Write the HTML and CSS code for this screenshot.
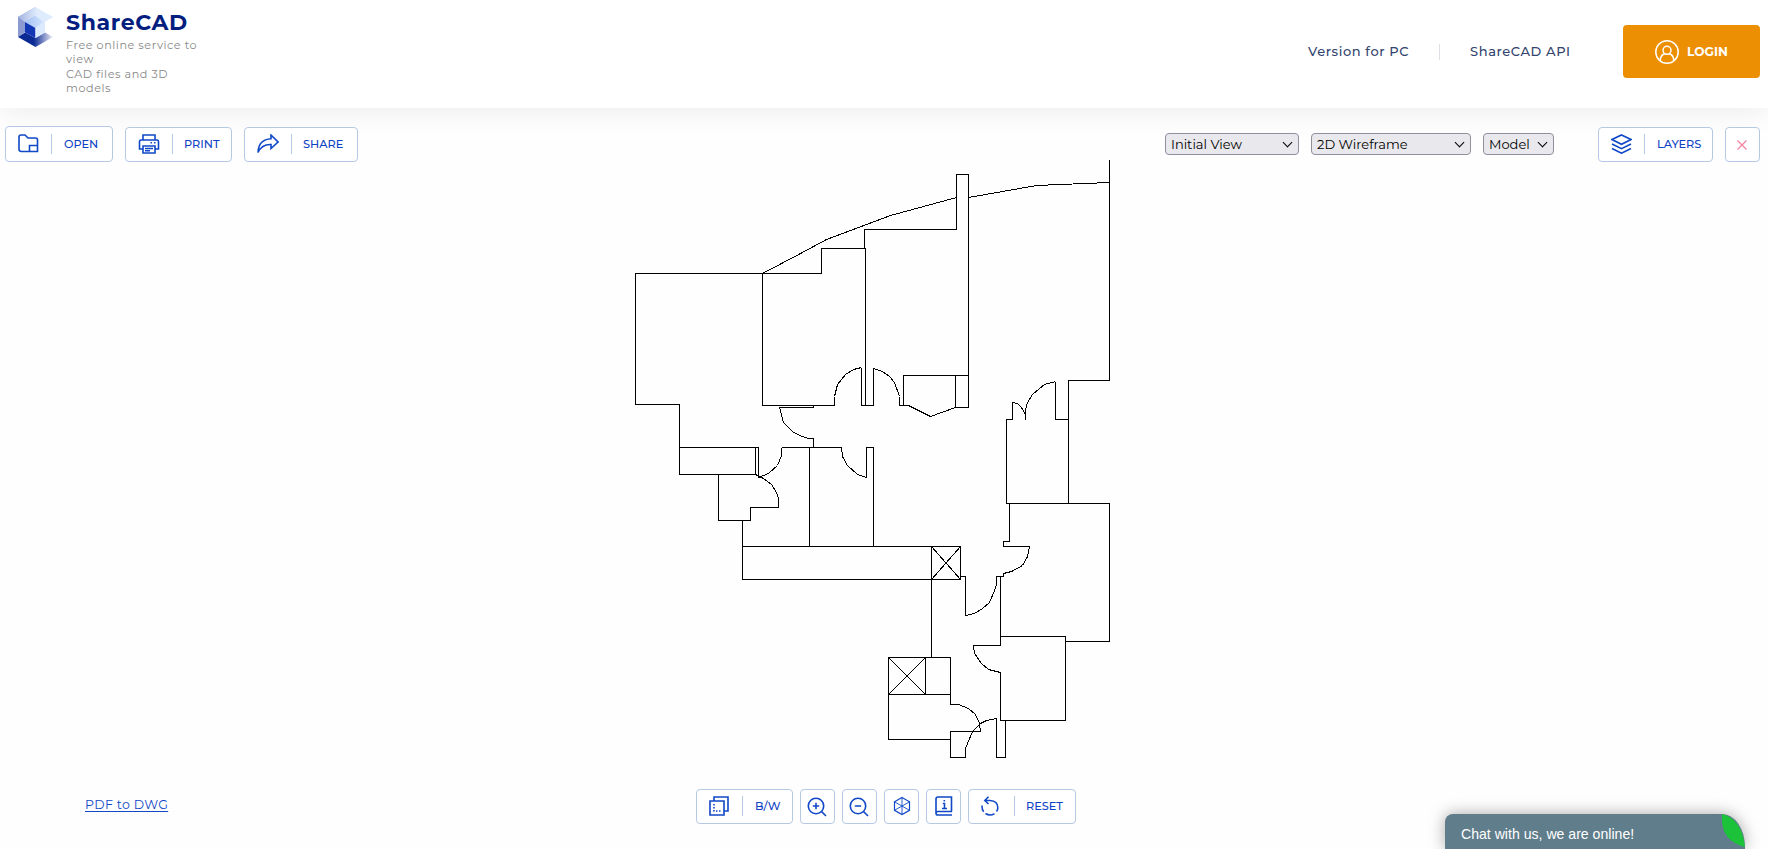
FILE: index.html
```html
<!DOCTYPE html>
<html lang="en">
<head>
<meta charset="utf-8">
<title>ShareCAD</title>
<link rel="stylesheet" href="styles.css">
</head>
<body>
<header class="header">
  <a class="brand">
    <svg class="brand-logo" width="35" height="40" viewBox="0 0 35 40">
      <defs>
        <linearGradient id="g1" x1="0" x2="1"><stop offset="0" stop-color="#a3b3df"/><stop offset="1" stop-color="#dbe8fb"/></linearGradient>
        <linearGradient id="g2" x1="0" x2="1"><stop offset="0.45" stop-color="#0b2a94"/><stop offset="1" stop-color="#f0f0f6"/></linearGradient>
        <linearGradient id="g3" x1="0" x2="1"><stop offset="0" stop-color="#a5c3f6"/><stop offset="1" stop-color="#d5e5fd"/></linearGradient>
      </defs>
      <path d="M0 10 17.500 0V10L7 15V25L0 30Z" fill="#8b9bd2"/>
      <path d="M0 10 17.500 0V9L7 15Z" fill="url(#g1)"/>
      <path d="M17.500 0 35 10 27 15 17.500 9Z" fill="#dfecfe"/>
      <path d="M0 30 7 25.500 17.500 31 27 25.500 35 30 17.500 40Z" fill="url(#g2)"/>
      <path d="M7 15 17.500 9 27 15 17.500 21Z" fill="url(#g3)"/>
      <path d="M7 15 17.500 21V31L7 25.500Z" fill="#1236b4"/>
      <path d="M27 15 17.500 21V31L27 25.500Z" fill="#dceafe"/>
    </svg>
    <span class="brand-text">
      <span class="brand-name">ShareCAD</span>
      <span class="brand-tag">Free online service to<br>view<br>CAD files and 3D<br>models</span>
    </span>
  </a>
  <nav class="nav">
    <a class="nav-link nav-pc">Version for PC</a>
    <a class="nav-link nav-api">ShareCAD API</a>
    <a class="login">
      <svg width="24" height="24" viewBox="0 0 24 24" fill="none" stroke="#fff" stroke-width="1.500"><circle cx="12" cy="12" r="11.200"/><circle cx="12" cy="10.300" r="4"/><path d="M5.200 20.500C5.400 16.500 7.500 14.300 10 13.800M18.800 20.500C18.600 16.500 16.500 14.300 14 13.800"/></svg>
      <span class="login-label">LOGIN</span>
    </a>
  </nav>
</header>
<main class="viewer">
  <div class="toolbar">
    <button class="btn btn-open"><svg width="21" height="19" viewBox="0 0 21 19" class="ico"><path d="M11.500 17.500H3.500Q1 17.500 1 15V3Q1 1 3 1H7L10 4H17.500Q19.500 4 19.500 6V17.500H11.500V11.500H19.500"/></svg><i class="sep"></i><span class="label">OPEN</span></button>
    <button class="btn btn-print"><svg width="22" height="20" viewBox="0 0 22 20" class="ico"><path d="M5 6V1H17V6M5 15H1.500V7.500Q1.500 6 3 6H19Q20.500 6 20.500 7.500V15H17M5 12H17V19H5ZM7 14.500H15M7 16.700H12M12.500 8.800H14M16 8.800H17.500"/></svg><i class="sep"></i><span class="label">PRINT</span></button>
    <button class="btn btn-share"><svg width="22" height="20" viewBox="0 0 22 20" class="ico"><path d="M14 1 21 8 14 14.500V10.500Q5 10 1 18.500Q1.500 5.500 14 4.800Z"/></svg><i class="sep"></i><span class="label">SHARE</span></button>
    <div class="view-options">
      <span class="pick pick-view"><select><option>Initial View</option></select></span>
      <span class="pick pick-style"><select><option>2D Wireframe</option></select></span>
      <span class="pick pick-space"><select><option>Model</option></select></span>
    </div>
    <button class="btn btn-layers"><svg width="21" height="20" viewBox="0 0 21 20" class="ico"><path d="M10.500 1 20 5.500 10.500 10.300 1 5.500ZM1 10 10.500 14.700 20 10M1 14.500 10.500 19.200 20 14.500"/></svg><i class="sep"></i><span class="label">LAYERS</span></button>
    <button class="btn btn-close"><svg width="10" height="10" viewBox="0 0 10 10" fill="none" stroke="#f77f9e" stroke-width="1.200"><path d="M.5.5 9.500 9.500M9.500.5.5 9.500"/></svg></button>
  </div>
  <svg class="drawing" width="500" height="620" viewBox="620 160 500 620">
    <g transform="translate(.5 .5)">
      <path d="M762 273H635V404H679V474H755V447M679 447H758V477M762 273H821V248H865V405M864 248V229H956V174H968V407H955V375M762 273V405H834V396M861 367V405H873V368M899 396V405H908M903 405V375H968M779 407H813V405"/>
      <path d="M762 273 800 253 826 239 890 215 956 197M968 197 1036 185 1060 184 1109 182"/>
      <path d="M834 396 837 384 845 374 853 369 861 367M873 368 882 371 889 376 894 382 899 396M908 405 930 416 955 407"/>
      <path d="M1109 159V380H1068V503M1055 381V419H1068M1025 419V409L1027 402 1032 394 1044 384 1055 381M1025 414 1021 407 1017 403 1012 402V419H1006V503H1109V641H1065"/>
      <path d="M779 407 783 422 793 432 802 436 808 438H813V447M781 447V455L777 465 768 473 758 477M755 474 763 478 771 484 776 492 778 498V507H750V520H718V474M781 447H841L842 456 847 465 857 474 866 477V447H873V546M809 447V546M742 520V579H960V546H742"/>
      <path d="M931 546V657M931 546 960 579M960 546 931 579M960 576H965V615L974 613 982 608 989 602 994 590 996 584V576H1003V573L1011 571 1022 565 1027 556 1029 546H1003V541H1009V503M1000 576V645H973L974 653 981 663 988 669 1000 672V720H1065V636H1000"/>
      <path d="M888 657H950V704H958L968 708 975 714 979 723 980 731H950V757H965V748L972 731 980 723 986 720 996 718V757H1005V720M950 739H888V657M925 657V694M888 694H950M888 657 925 694M925 657 888 694"/>
    </g>
  </svg>
  <div class="footer">
    <a class="pdf-link">PDF to DWG</a>
    <div class="tools">
      <button class="btn btn-bw"><svg width="20" height="20" viewBox="0 0 20 20" class="ico"><path d="M5 5V1H19V15H15M1 5H15V19H1Z"/><path d="M5 8V15H13" stroke-dasharray="1.500 1.500"/></svg><i class="sep"></i><span class="label">B/W</span></button>
      <button class="btn btn-sq btn-zoom"><svg width="20" height="20" viewBox="0 0 20 20" class="ico"><circle cx="9" cy="9" r="7.700"/><path d="M14.500 14.500 19 19M5.800 9H12.200M9 5.800V12.200"/></svg></button>
      <button class="btn btn-sq btn-zoom"><svg width="20" height="20" viewBox="0 0 20 20" class="ico"><circle cx="9" cy="9" r="7.700"/><path d="M14.500 14.500 19 19M5.800 9H12.200"/></svg></button>
      <button class="btn btn-sq"><svg width="20" height="20" viewBox="0 0 20 20" class="ico thin"><path d="M10 1.500 17.500 5.800V14.300L10 18.500 2.500 14.300V5.800Z"/><path stroke-width=".9" d="M10 1.500V18.500M2.500 5.800 17.500 14.300M17.500 5.800 2.500 14.300"/></svg></button>
      <button class="btn btn-sq"><svg width="20" height="20" viewBox="0 0 20 20" class="ico"><path d="M18 15.500H4Q2 15.500 2 17.200T4 19H18M2 17V3Q2 1 4 1H17.500V15.500"/><path d="M8.800 7.500H10.500V12.500M8 12.500H13M10.300 4V5.500"/></svg></button>
      <button class="btn btn-reset"><svg width="18" height="20" viewBox="0 0 18 20" class="ico"><path d="M7.500.8 3.800 4.500 7.500 8M4 4.500H9Q17 5 16.800 12Q16.700 14 15.500 15.500M13.500 17.600Q9 20.500 4.500 17.500M2.700 15.700Q.8 13.500 1 9.500"/></svg><i class="sep"></i><span class="label">RESET</span></button>
    </div>
  </div>
</main>
<aside class="chat">
  <span class="chat-text">Chat with us, we are online!</span>
  <svg class="leaf" width="23" height="35" viewBox="0 0 23 35"><path d="M0 0Q20 5 23 33Q-2 27 0 0Z" fill="#1bc23a"/></svg>
</aside>
</body>
</html>
```

FILE: styles.css
```css
* { box-sizing: border-box; }
body {
  margin: 0;
  height: 849px;
  overflow: hidden;
  display: flex;
  flex-direction: column;
  background: #fefefe;
  font-family: Montserrat, Inter, "Noto Sans", sans-serif;
}
.header {
  flex: none;
  height: 108px;
  display: flex;
  justify-content: space-between;
  align-items: flex-start;
  padding: 7px 8px 0 18px;
  background: #fff;
  box-shadow: 0 0 30px rgba(0, 0, 0, .09);
}
.brand { display: flex; gap: 13px; }
.brand-text { display: flex; flex-direction: column; }
.brand-name {
  margin-top: 2px;
  height: 29px;
  line-height: 27px;
  font-size: 22px;
  font-weight: 700;
  letter-spacing: .65px;
  color: #041e80;
}
.brand-tag {
  font-size: 11.200px;
  line-height: 14.300px;
  letter-spacing: .56px;
  color: #888;
  white-space: nowrap;
}
.nav { display: flex; align-items: center; margin-top: 18px; height: 53px; }
.nav-link {
  padding-bottom: 2px;
  font-size: 13px;
  letter-spacing: .6px;
  font-weight: 500;
  color: #33446e;
  white-space: nowrap;
}
.nav-pc { width: 131px; }
.nav-api { width: 184px; border-left: 1px solid #dcdfe6; padding-left: 30px; line-height: 14px; }
.login {
  width: 137px;
  height: 53px;
  display: flex;
  align-items: center;
  gap: 8px;
  padding-left: 32px;
  border-radius: 4px;
  background: #ec8f02;
  color: #fff;
}
.login-label { font-size: 12.200px; font-weight: 700; }
.viewer { flex: 1; display: flex; flex-direction: column; align-items: stretch; }
.toolbar { flex: none; height: 54px; display: flex; align-items: flex-end; padding: 0 8px 0 5px; }
.btn {
  flex: none;
  height: 35px;
  display: flex;
  align-items: center;
  padding: 0 0 1px 12px;
  border: 1px solid #b5c8e4;
  border-radius: 4px;
  background: #fff;
  color: #0d42c4;
  font: 500 11.300px Montserrat, Inter, sans-serif;
}
.ico { flex: none; fill: none; stroke: #1048c8; stroke-width: 1.600; }
.thin { stroke-width: 1.200; }
.sep { width: 1px; height: 20px; background: #b5c8e4; margin: 0 12px; }
.btn-open { width: 108px; height: 36px; margin-right: 12px; }
.btn-print { width: 107px; margin-right: 12px; }
.btn-print .label { margin-left: -1px; }
.btn-share { width: 114px; }
.btn-share .label { margin-left: -1px; }
.view-options { margin-left: auto; display: flex; gap: 12px; height: 35px; align-items: center; }
.pick { position: relative; height: 22px; margin-bottom: 1px; }
.pick select {
  appearance: none;
  display: block;
  width: 100%;
  height: 22px;
  padding: 0 5px;
  border: 1px solid #8f8f9d;
  border-radius: 4px;
  background: #e9e9ed;
  color: #000;
  font: 13px Montserrat, Inter, sans-serif;
}
.pick::after {
  content: "";
  position: absolute;
  right: 8px;
  top: 6px;
  width: 6px;
  height: 6px;
  border: solid #000;
  border-width: 0 1.600px 1.600px 0;
  transform: rotate(45deg);
}
.pick-view { width: 134px; }
.pick-style { width: 160px; }
.pick-space { width: 71px; }
.btn-layers { width: 115px; margin-left: 44px; }
.btn-close { width: 35px; margin-left: 12px; justify-content: center; padding: 0 1px 0 0; }
.drawing {
  flex: none;
  align-self: flex-start;
  margin: -2px 0 0 620px;
  fill: none;
  stroke: #000;
  stroke-width: 1;
  shape-rendering: crispEdges;
}
.footer { display: flex; padding: 9px 0 0 85px; }
.pdf-link {
  width: 611px;
  margin-top: 8px;
  font-size: 12.500px;
  letter-spacing: .35px;
  color: #1048c8;
  text-decoration: underline;
  text-underline-offset: 2px;
}
.tools { display: flex; gap: 7px; }
.btn-bw { width: 97px; }
.btn-bw .sep { margin-left: 13px; }
.btn-reset .label { margin-left: -1px; }
.btn-sq { width: 35px; padding: 0 0 1px; justify-content: center; }
.btn-zoom { padding: 0 1px 0 0; }
.btn-reset { width: 108px; }
.btn-reset .sep { margin-left: 15px; }
.chat {
  position: absolute;
  left: 1445px;
  top: 814px;
  width: 300px;
  height: 35px;
  border-radius: 8px 23px 0 0 / 8px 33px 0 0;
  background: #607d8b;
  box-shadow: 0 0 16px rgba(0, 0, 0, .35);
  color: #fff;
  font: 14.100px/20px "Liberation Sans", Arial, sans-serif;
  padding: 10px 16px;
}
.leaf { position: absolute; right: 0; top: 0; }
```
